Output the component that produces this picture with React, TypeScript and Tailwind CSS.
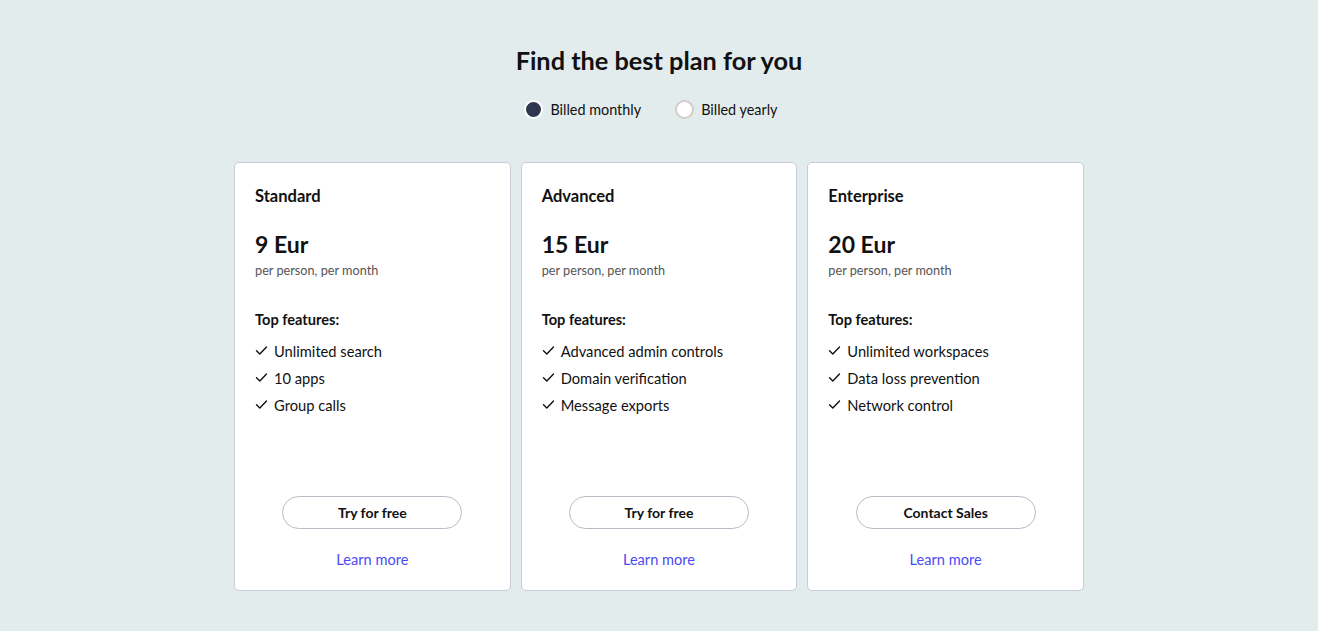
import React, { useState } from 'react';

const plans = [
    {
        name: 'Standard',
        price: '9 Eur',
        features: ['Unlimited search', '10 apps', 'Group calls'],
        cta: 'Try for free',
    },
    {
        name: 'Advanced',
        price: '15 Eur',
        features: ['Advanced admin controls', 'Domain verification', 'Message exports'],
        cta: 'Try for free',
    },
    {
        name: 'Enterprise',
        price: '20 Eur',
        features: ['Unlimited workspaces', 'Data loss prevention', 'Network control'],
        cta: 'Contact Sales',
    },
];

const CheckIcon = () => (
    <svg width="13" height="13" viewBox="0 0 13 13" fill="none" className="shrink-0">
        <path d="M1.5 6.8 L4.8 10 L11.5 3" stroke="#111" strokeWidth="1.4" strokeLinecap="round" strokeLinejoin="round" />
    </svg>
);

const Radio = ({ checked, label, onClick }: { checked: boolean; label: string; onClick: () => void }) => (
    <button onClick={onClick} className="flex items-center gap-[7px] cursor-pointer">
        {checked ? (
            <span className="w-[19px] h-[19px] rounded-full bg-[#2e3650] border-2 border-white box-border" />
        ) : (
            <span className="w-[19px] h-[19px] rounded-full bg-white border-2 border-[#d6cccc] box-border" />
        )}
        <span className="text-[14.4px] text-[#111]">{label}</span>
    </button>
);

export default function App() {
    const [billing, setBilling] = useState<'monthly' | 'yearly'>('monthly');

    return (
        <div className="min-h-[631px] bg-[#e3ecec] flex flex-col items-center pt-[45px] font-['Lato','Liberation_Sans',sans-serif] text-[#111]">
            <h1 className="text-[25.3px] leading-[30px] font-bold text-[#111]">Find the best plan for you</h1>
            <div className="flex items-center gap-[34px] mt-[24px] mr-[16px]">
                <Radio checked={billing === 'monthly'} label="Billed monthly" onClick={() => setBilling('monthly')} />
                <Radio checked={billing === 'yearly'} label="Billed yearly" onClick={() => setBilling('yearly')} />
            </div>
            <div className="flex gap-[10px] mt-[41px]">
                {plans.map((plan) => (
                    <div
                        key={plan.name}
                        className="w-[276.67px] h-[429px] bg-white border border-[#c9ccd6] rounded-[5px] flex flex-col px-[20px] pt-[23px] pb-[20px]"
                    >
                        <h3 className="text-[16.5px] leading-[20px] font-bold">{plan.name}</h3>
                        <div className="mt-[24px] text-[23px] leading-[28px] font-bold">{plan.price}</div>
                        <div className="mt-[4px] text-[12.7px] leading-[16px] text-[#555]">per person, per month</div>
                        <div className="mt-[32px] text-[14.6px] leading-[20px] font-bold">Top features:</div>
                        <ul className="mt-[11px] flex flex-col gap-[7px]">
                            {plan.features.map((f) => (
                                <li key={f} className="flex items-center gap-[6px] text-[14.7px] leading-[20px]">
                                    <CheckIcon />
                                    <span>{f}</span>
                                </li>
                            ))}
                        </ul>
                        <div className="mt-auto flex flex-col items-center">
                            <button className="w-[180px] h-[33px] rounded-full border border-[#b9bcc6] bg-white text-[14px] font-bold text-[#111] cursor-pointer">
                                {plan.cta}
                            </button>
                            <a href="#" className="mt-[21px] text-[14.6px] leading-[20px] text-[#4b4bf5]">
                                Learn more
                            </a>
                        </div>
                    </div>
                ))}
            </div>
        </div>
    );
}
